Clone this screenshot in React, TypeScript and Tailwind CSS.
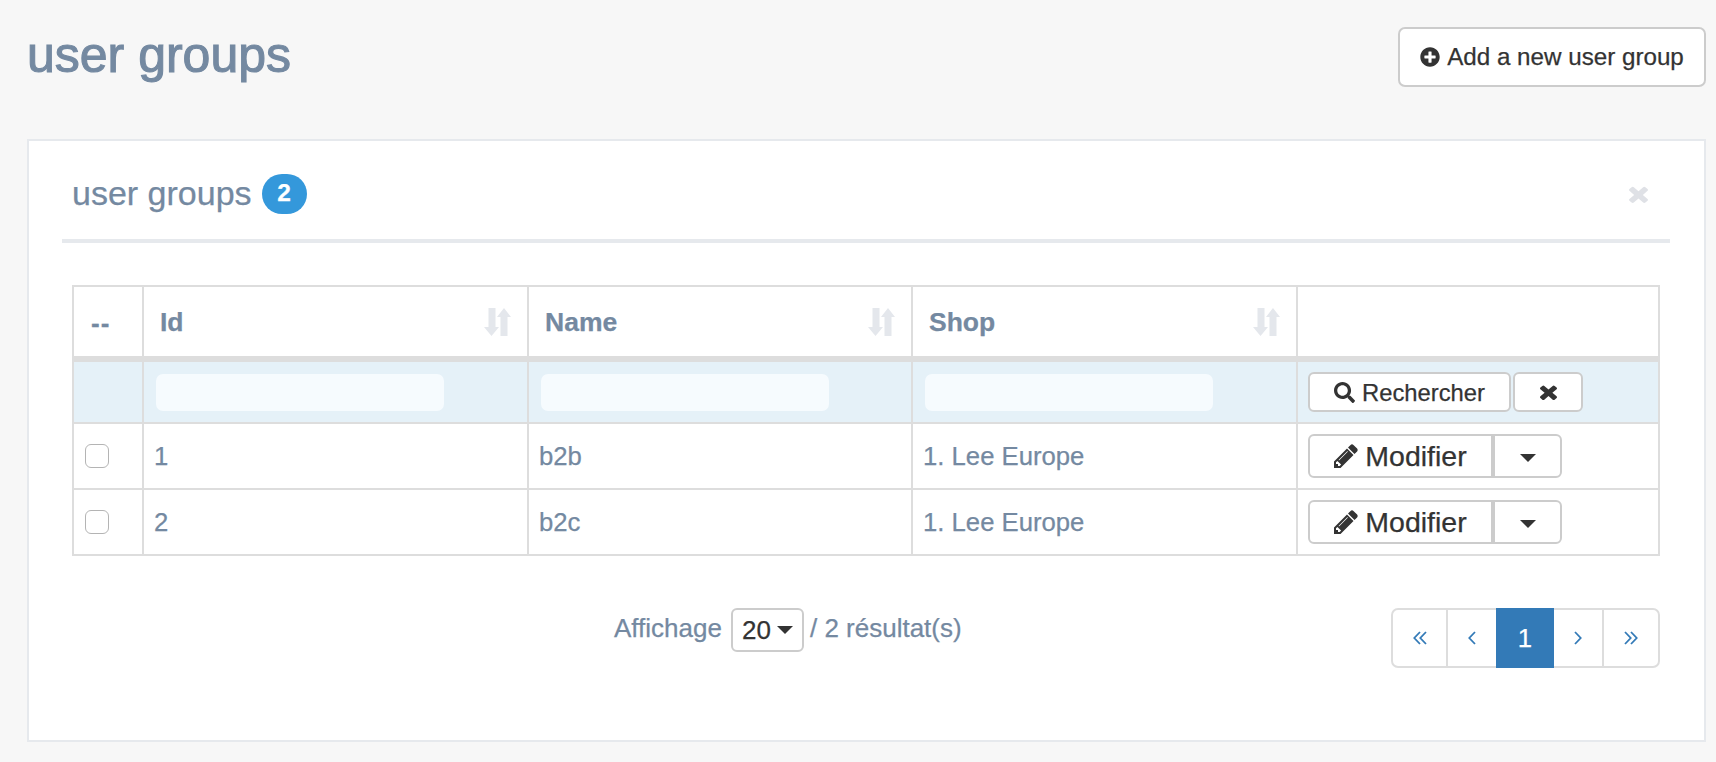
import type { ReactNode } from "react";
import { FaPlusCircle, FaSearch } from "react-icons/fa";

const font = "font-['Liberation_Sans',Arial,sans-serif]";

function SortIcon() {
  return (
    <svg width="27" height="28" viewBox="0 0 27 28" className="fill-[#e4e7ec]">
      <path d="M4.5 0h7v19H15l-7.500 9L0 19h4.500z" />
      <path d="M20 0l7 9h-3.500v19h-7V9H13z" />
    </svg>
  );
}

function TimesIcon({ w, h, cls }: { w: number; h: number; cls: string }) {
  return (
    <svg width={w} height={h} viewBox="302 238 1188 1316" preserveAspectRatio="none" className={cls}>
      <path d="M1490 1322q0 40-28 68l-136 136q-28 28-68 28t-68-28l-294-294-294 294q-28 28-68 28t-68-28l-136-136q-28-28-28-68t28-68l294-294-294-294q-28-28-28-68t28-68l136-136q28-28 68-28t68 28l294 294 294-294q28-28 68-28t68 28l136 136q28 28 28 68t-28 68l-294 294 294 294q28 28 28 68z" />
    </svg>
  );
}

function PencilIcon() {
  return (
    <svg width="24" height="24" viewBox="128 128 1536 1536" className="fill-[#333]">
      <path d="M491 1536l91-91-235-235-91 91v107h128v128h107zm523-928q0-22-22-22-10 0-17 7l-542 542q-7 7-7 17 0 22 22 22 10 0 17-7l542-542q7-7 7-17zm-54-192l416 416-832 832h-416v-416zm683 96q0 53-37 90l-166 166-416-416 166-165q36-38 90-38 53 0 91 38l235 234q37 39 37 91z" />
    </svg>
  );
}

function Chevrons({ dir, double }: { dir: "l" | "r"; double?: boolean }) {
  const w = double ? 14 : 8;
  return (
    <svg width={w} height="14" viewBox={`0 0 ${w} 14`} fill="none" stroke="#337ab7" strokeWidth="1.8" className={dir === "r" ? "-scale-x-100" : ""}>
      <path d="M7 1L1.300 7 7 13" />
      {double && <path d="M13 1L7.300 7 13 13" />}
    </svg>
  );
}

function Caret() {
  return <span className="inline-block border-x-[8px] border-t-[8px] border-x-transparent border-t-[#333]" />;
}

function Head({ label }: { label: string }) {
  return (
    <th className="h-[73px] border-2 border-b-[6px] border-[#ddd] px-[16px] text-left">
      <div className="flex items-center justify-between text-[26.5px] font-bold text-[#7489a1]">
        <span className="pt-[3px]">{label}</span>
        <SortIcon />
      </div>
    </th>
  );
}

function FilterCell() {
  return (
    <td className="border-2 border-[#ddd] pl-[12px]">
      <div className="h-[37px] w-[288px] rounded-[7px] bg-[#f6fbfe]" />
    </td>
  );
}

function Row({ id, name }: { id: string; name: string }) {
  const cell = "border-2 border-[#ddd] px-[10px] text-[25.7px] text-[#7489a1]";
  return (
    <tr className="h-[66px]">
      <td className="border-2 border-[#ddd] pl-[11px]">
        <input type="checkbox" className="block h-[24px] w-[24px] appearance-none rounded-[6px] border-[1.5px] border-[#b4b4b4] bg-white" />
      </td>
      <td className={cell}>{id}</td>
      <td className={cell}>{name}</td>
      <td className={cell}>1. Lee Europe</td>
      <td className="border-2 border-[#ddd] pl-[10px]">
        <div className="flex h-[44px] w-[254px] rounded-[6px] border-2 border-[#ccc] bg-white text-[#333]">
          <button className="flex w-[185px] items-center justify-center gap-[7px] border-r-4 border-[#ccc] text-[28.5px]">
            <PencilIcon />
            Modifier
          </button>
          <button className="flex flex-1 items-center justify-center pt-[3px]">
            <Caret />
          </button>
        </div>
      </td>
    </tr>
  );
}

function PageCell({ children, cls }: { children: ReactNode; cls: string }) {
  return <span className={`flex items-center justify-center border-[#ddd] ${cls}`}>{children}</span>;
}

export default function App() {
  return (
    <div className={`${font} h-[762px] overflow-hidden bg-[#f7f7f7] pl-[27px] [-webkit-text-stroke:0.25px]`}>
      <div className="flex h-[139px] w-[1679px] items-start justify-between">
        <h1 className="mt-[24px] text-[50px] leading-[62px] font-medium text-[#7489a1] [-webkit-text-stroke:1.1px_#7489a1]">user groups</h1>
        <button className="mt-[27px] flex h-[60px] w-[308px] items-center justify-center gap-[7px] rounded-[7px] border-2 border-[#ccc] bg-white text-[24.2px] text-[#333]">
          <FaPlusCircle className="text-[20px]" />
          Add a new user group
        </button>
      </div>
      <div className="h-[603px] w-[1679px] border-2 border-[#e6e9ed] bg-white pl-[33px] pr-[34px]">
        <div className="flex h-[102px] items-center justify-between border-b-4 border-[#e6e9ed] pl-[10px] pr-[22px] pt-[7px]">
          <div className="flex items-center gap-[10px] text-[34px] text-[#7489a1]">
            <span>user groups</span>
            <span className="flex h-[40px] w-[45px] items-center justify-center rounded-full bg-[#3498db] text-[24.5px] font-bold text-white">2</span>
          </div>
          <TimesIcon w={19} h={18} cls="fill-[#dfe1e6]" />
        </div>
        <table className="mt-[42px] ml-[10px] w-[1586px] table-fixed border-collapse">
          <colgroup>
            <col className="w-[70px]" />
            <col className="w-[385px]" />
            <col className="w-[384px]" />
            <col className="w-[385px]" />
            <col className="w-[362px]" />
          </colgroup>
          <thead>
            <tr>
              <th className="h-[73px] border-2 border-b-[6px] border-[#ddd] pl-[17px] pt-[3px] text-left text-[26px] font-bold tracking-[1px] text-[#7489a1]">--</th>
              <Head label="Id" />
              <Head label="Name" />
              <Head label="Shop" />
              <th className="border-2 border-b-[6px] border-[#ddd]" />
            </tr>
          </thead>
          <tbody>
            <tr className="h-[64px] bg-[#e5f1f8]">
              <td className="border-2 border-[#ddd]" />
              <FilterCell />
              <FilterCell />
              <FilterCell />
              <td className="border-2 border-[#ddd] pl-[10px]">
                <div className="flex text-[#333]">
                  <button className="flex h-[40px] w-[203px] items-center justify-center gap-[7px] rounded-[6px] border-2 border-[#ccc] bg-white pt-[1px] text-[23.8px]">
                    <FaSearch className="text-[21px]" />
                    Rechercher
                  </button>
                  <button className="ml-[2px] flex h-[40px] w-[70px] items-center justify-center rounded-[6px] border-2 border-[#ccc] bg-white">
                    <TimesIcon w={17} h={16} cls="fill-[#333]" />
                  </button>
                </div>
              </td>
            </tr>
            <Row id="1" name="b2b" />
            <Row id="2" name="b2c" />
          </tbody>
        </table>
        <div className="mt-[52px] ml-[10px] flex w-[1588px] items-start">
          <div className="ml-[542px] flex items-center text-[26px] text-[#7489a1]">
            <span className="mb-[3px]">Affichage</span>
            <span className="ml-[9px] mr-[6px] flex h-[44px] w-[73px] items-center justify-center gap-[6px] rounded-[6px] border-2 border-[#ccc] bg-white text-[#333]">
              20
              <Caret />
            </span>
            <span className="mb-[3px]">/ 2 résultat(s)</span>
          </div>
          <div className="ml-auto flex h-[60px] w-[269px] rounded-[7px] border-2 border-[#ddd] bg-white">
            <PageCell cls="w-[55px] border-r-2"><Chevrons dir="l" double /></PageCell>
            <PageCell cls="w-[48px]"><Chevrons dir="l" /></PageCell>
            <PageCell cls="-my-[2px] w-[58px] bg-[#337ab7] text-[25.7px] text-white">1</PageCell>
            <PageCell cls="w-[50px] border-r-2"><Chevrons dir="r" /></PageCell>
            <PageCell cls="flex-1"><Chevrons dir="r" double /></PageCell>
          </div>
        </div>
      </div>
    </div>
  );
}
